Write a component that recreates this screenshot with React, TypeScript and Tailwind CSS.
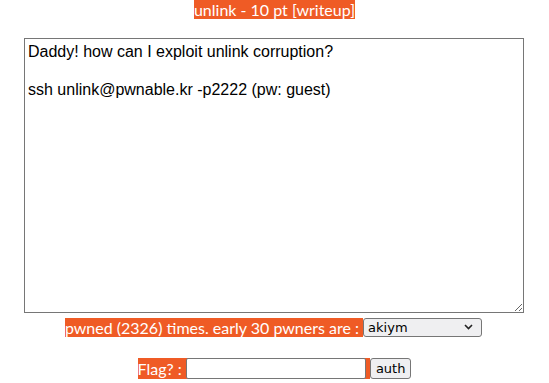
import React from "react";

export default function App() {
  const orange = "bg-[#ef5b25] text-white";
  return (
    <div className="w-[549px] h-[383px] bg-white font-['Lato',sans-serif] text-[16px] leading-[19px] overflow-hidden">
      <div className="flex justify-center pt-0">
        <span className={orange}>unlink - 10 pt [writeup]</span>
      </div>
      <div className="flex justify-center mt-[19px] pr-[1px]">
        <textarea
          readOnly
          defaultValue={"Daddy! how can I exploit unlink corruption?\n\nssh unlink@pwnable.kr -p2222 (pw: guest)"}
          className="w-[500px] h-[275px] border border-[#767676] px-[3px] pt-[3px] pb-[2px] font-['Liberation_Sans',Arial,sans-serif] text-[16px] leading-[19px] text-black resize"
        />
      </div>
      <div className="flex justify-center items-center mt-[5px] ml-[-2px]">
        <span className={orange}>pwned (2326) times. early 30 pwners are :&nbsp;</span>
        <div className="relative w-[119px] h-[19px] rounded-[3px] border border-[#767676] bg-[#efeff1] font-['DejaVu_Sans',sans-serif] text-[13px] leading-[17px] text-black pl-[4px]">
          akiym
          <svg className="absolute right-[8px] top-[5px]" width="9" height="6" viewBox="0 0 9 6" fill="none">
            <path d="M1 1 L4.5 4.5 L8 1" stroke="#222" strokeWidth="1.6" />
          </svg>
        </div>
      </div>
      <div className="flex justify-center items-center mt-[21px]">
        <span className={orange + " flex items-center"}>
          Flag? :&nbsp;
          <span className="inline-block w-[180px] h-[21px] border border-[#767676] bg-white rounded-[2px]" />
          <span className="w-[4px]">&nbsp;</span>
        </span>
        <button className="h-[21px] px-[5px] rounded-[3px] border border-[#767676] bg-[#efeff1] font-['DejaVu_Sans',sans-serif] text-[13px] text-black leading-[17px]">
          auth
        </button>
      </div>
    </div>
  );
}
